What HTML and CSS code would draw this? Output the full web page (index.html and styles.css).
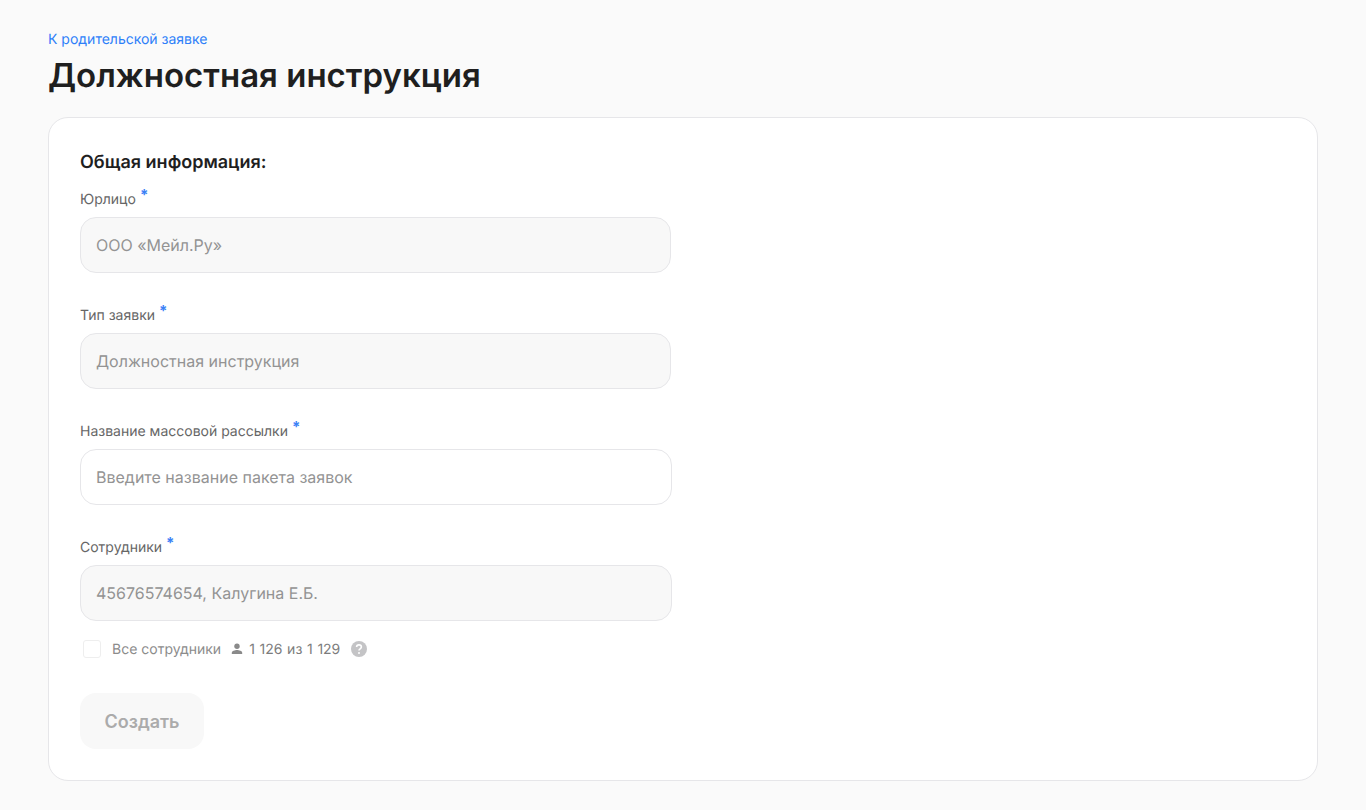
FILE: index.html
```html
<!DOCTYPE html>
<html lang="ru">
<head>
<meta charset="utf-8">
<title>Должностная инструкция</title>
<link rel="stylesheet" href="styles.css">
</head>
<body>
<main class="page">
  <a class="back" href="#">К родительской заявке</a>
  <h1 class="title">Должностная инструкция</h1>
  <section class="card">
    <h2 class="heading">Общая информация:</h2>
    <div class="field field-narrow">
      <label class="label">Юрлицо<span class="req">*</span></label>
      <div class="input input-disabled">ООО «Мейл.Ру»</div>
    </div>
    <div class="field field-narrow">
      <label class="label">Тип заявки<span class="req">*</span></label>
      <div class="input input-disabled">Должностная инструкция</div>
    </div>
    <div class="field">
      <label class="label">Название массовой рассылки<span class="req">*</span></label>
      <div class="input">Введите название пакета заявок</div>
    </div>
    <div class="field field-last">
      <label class="label">Сотрудники<span class="req">*</span></label>
      <div class="input input-disabled">45676574654, Калугина Е.Б.</div>
    </div>
    <div class="all-row">
      <span class="checkbox"></span>
      <span class="all-text">Все сотрудники</span>
      <svg class="person" width="16" height="16" viewBox="0 0 16 16"><circle cx="8" cy="5.2" r="2.7" fill="#8a8a8a"/><path d="M2.8 13v-1.2c0-1.9 3.2-2.8 5.2-2.8s5.2.9 5.2 2.8V13z" fill="#8a8a8a"/></svg>
      <span class="count">1 126 из 1 129</span>
      <svg class="help" width="18" height="18" viewBox="0 0 18 18"><circle cx="9" cy="9" r="8" fill="#c4c4c6"/><path d="M6.6 7.1c0-1.4 1.1-2.2 2.4-2.2s2.4.8 2.4 2.1c0 1.8-2.4 1.8-2.4 3.4" fill="none" stroke="#fff" stroke-width="1.6"/><circle cx="9" cy="12.9" r="1" fill="#fff"/></svg>
    </div>
    <button class="submit" type="button" disabled>Создать</button>
  </section>
</main>
</body>
</html>
```
FILE: styles.css
```css
* { box-sizing: border-box; }
html, body { margin: 0; padding: 0; }
body {
  background: #fafafa;
  font-family: Inter, "Liberation Sans", sans-serif;
  color: #1f1f1f;
  height: 810px;
  overflow: hidden;
  text-rendering: geometricPrecision;
}
.page { padding: 32px 48px 0; }
.back {
  display: block;
  font-size: 14px;
  line-height: 16px;
  color: #2d7ff9;
  text-decoration: none;
}
.title {
  margin: 2px 0 0;
  font-size: 33px;
  line-height: 50px;
  font-weight: 600;
  color: #1f1f1f;
}
.card {
  margin-top: 17px;
  height: 664px;
  background: #fff;
  border: 1px solid #e6e6e9;
  border-radius: 20px;
  padding: 33px 31px 0;
}
.heading {
  margin: 0;
  font-size: 18px;
  line-height: 24px;
  font-weight: 600;
  color: #1f1f1f;
}
.field { width: 592px; margin-top: 12px; height: 104px; }
.heading + .field { margin-top: 11px; }
.field-narrow .input { width: 591px; }
.label {
  display: block;
  font-size: 14px;
  line-height: 24px;
  height: 31px;
  padding-top: 1px;
  color: #666666;
}
.req {
  display: inline-block;
  margin-left: 4px;
  color: #3b82f6;
  font-size: 15px;
  font-weight: 700;
  line-height: 16px;
  vertical-align: 4px;
}
.input {
  height: 56px;
  border: 1px solid #e6e6e9;
  border-radius: 16px;
  padding: 0 15px;
  display: flex;
  align-items: center;
  font-size: 16px;
  color: #939393;
  background: #fff;
}
.input-disabled { background: #f8f8f8; }
.field-last { height: 103px; }
.all-row {
  display: flex;
  align-items: center;
  height: 24px;
  padding-left: 3px;
  font-size: 14px;
  color: #8c8c8c;
}
.checkbox {
  width: 18px;
  height: 18px;
  border: 1px solid #eeeeee;
  border-radius: 3px;
  background: #fff;
}
.all-text { margin-left: 11px; }
.person { margin-left: 8px; }
.count { margin-left: 4px; color: #7c7c7c; word-spacing: 0.75px; }
.help { margin-left: 10px; }
.submit {
  display: block;
  margin-top: 32px;
  width: 124px;
  height: 56px;
  border: 0;
  border-radius: 16px;
  background: #f8f8f8;
  color: #ababab;
  font-family: inherit;
  font-size: 18px;
  font-weight: 600;
}
```
